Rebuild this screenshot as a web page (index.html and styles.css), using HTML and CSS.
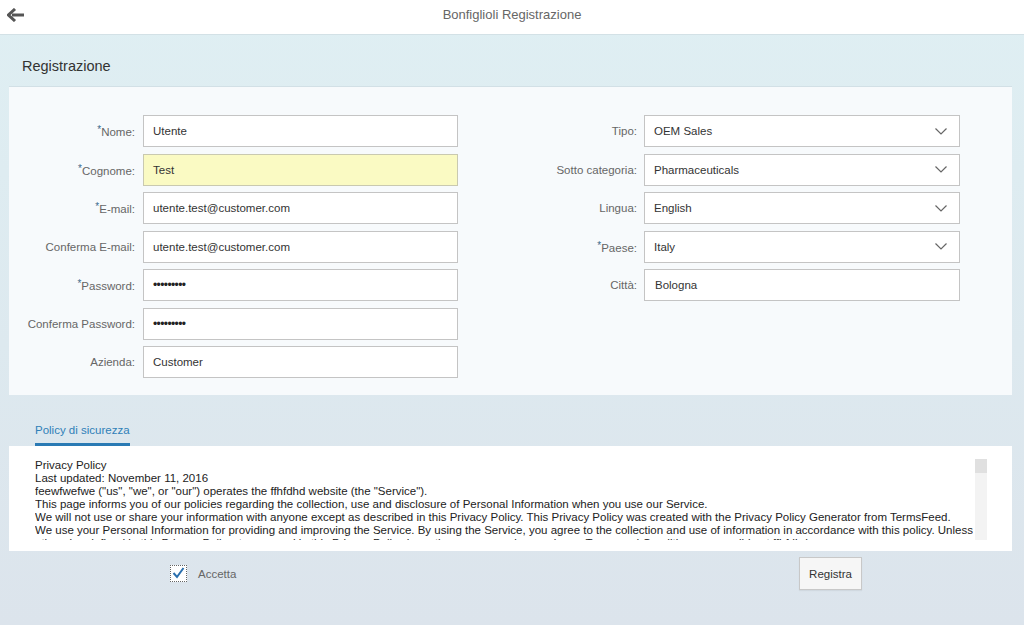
FILE: index.html
```html
<!DOCTYPE html>
<html lang="it">
<head>
<meta charset="utf-8">
<title>Bonfiglioli Registrazione</title>
<link rel="stylesheet" href="styles.css">
</head>
<body>
<header class="topbar">
  <button class="back" aria-label="Indietro">
    <svg width="18" height="14" viewBox="0 0 18 14"><path d="M17 7H5" stroke="#555" stroke-width="3" fill="none"/><path d="M8 1 L1.5 7 L8 13" stroke="#555" stroke-width="3" fill="none" stroke-linejoin="miter"/></svg>
  </button>
  <div class="topbar-title">Bonfiglioli Registrazione</div>
</header>
<main class="page">
  <div class="section-title">Registrazione</div>
  <section class="panel">
    <div class="col col-left">
      <label class="lbl"><span class="req">*</span>Nome:</label><div class="field">Utente</div>
      <label class="lbl"><span class="req">*</span>Cognome:</label><div class="field field-warn">Test</div>
      <label class="lbl"><span class="req">*</span>E-mail:</label><div class="field">utente.test@customer.com</div>
      <label class="lbl">Conferma E-mail:</label><div class="field">utente.test@customer.com</div>
      <label class="lbl"><span class="req">*</span>Password:</label><div class="field pw">•••••••••</div>
      <label class="lbl">Conferma Password:</label><div class="field pw">•••••••••</div>
      <label class="lbl">Azienda:</label><div class="field">Customer</div>
    </div>
    <div class="col col-right">
      <label class="lbl">Tipo:</label><div class="field select"><span>OEM Sales</span><svg class="chev" width="12" height="7" viewBox="0 0 12 7"><path d="M0.5 0.5 L6 6 L11.5 0.5" stroke="#666" stroke-width="1.2" fill="none"/></svg></div>
      <label class="lbl">Sotto categoria:</label><div class="field select"><span>Pharmaceuticals</span><svg class="chev" width="12" height="7" viewBox="0 0 12 7"><path d="M0.5 0.5 L6 6 L11.5 0.5" stroke="#666" stroke-width="1.2" fill="none"/></svg></div>
      <label class="lbl">Lingua:</label><div class="field select"><span>English</span><svg class="chev" width="12" height="7" viewBox="0 0 12 7"><path d="M0.5 0.5 L6 6 L11.5 0.5" stroke="#666" stroke-width="1.2" fill="none"/></svg></div>
      <label class="lbl"><span class="req">*</span>Paese:</label><div class="field select"><span>Italy</span><svg class="chev" width="12" height="7" viewBox="0 0 12 7"><path d="M0.5 0.5 L6 6 L11.5 0.5" stroke="#666" stroke-width="1.2" fill="none"/></svg></div>
      <label class="lbl">Città:</label><div class="field city">Bologna</div>
    </div>
  </section>
  <div class="tabs"><span class="tab active">Policy di sicurezza</span></div>
  <section class="policy">
    <div class="policy-text">
      Privacy Policy<br>
      Last updated: November 11, 2016<br>
      feewfwefwe ("us", "we", or "our") operates the ffhfdhd website (the "Service").<br>
      This page informs you of our policies regarding the collection, use and disclosure of Personal Information when you use our Service.<br>
      We will not use or share your information with anyone except as described in this Privacy Policy. This Privacy Policy was created with the Privacy Policy Generator from TermsFeed.<br>
      We use your Personal Information for providing and improving the Service. By using the Service, you agree to the collection and use of information in accordance with this policy. Unless otherwise defined in this Privacy Policy, terms used in this Privacy Policy have the same meanings as in our Terms and Conditions, accessible at ffhfdhd.
    </div>
    <div class="scrollbar"><div class="thumb"></div></div>
  </section>
  <div class="actions">
    <label class="accept">
      <span class="checkbox"><svg width="13" height="12" viewBox="0 0 13 12"><path d="M1.5 6 L5 10 L11.5 1" stroke="#2a6fae" stroke-width="2" fill="none"/></svg></span>
      <span>Accetta</span>
    </label>
    <button class="btn">Registra</button>
  </div>
</main>
</body>
</html>
```
FILE: styles.css
```css
* { box-sizing: border-box; }
html, body { margin: 0; padding: 0; }
body {
  font-family: "Liberation Sans", Arial, sans-serif;
  font-size: 11.5px;
  color: #333;
  width: 1024px;
  height: 625px;
  overflow: hidden;
  background: linear-gradient(#dfeff3 0%, #dde9ef 55%, #dce4ec 100%);
}
.topbar {
  height: 35px;
  background: #fff;
  border-bottom: 1px solid #d3e1e6;
  display: flex;
  align-items: center;
  position: relative;
}
.back {
  border: 0;
  background: transparent;
  padding: 0;
  margin-left: 7px;
  margin-top: -4px;
  width: 18px;
  height: 14px;
  display: flex;
}
.topbar-title {
  position: absolute;
  left: 0;
  right: 0;
  top: 7px;
  text-align: center;
  font-size: 13px;
  line-height: 16px;
  color: #666;
  pointer-events: none;
}
.page {
  padding: 0 12px 0 9px;
}
.section-title {
  height: 51px;
  padding: 22px 0 0 13px;
  font-size: 14.5px;
  line-height: 18px;
  color: #333;
}
.panel {
  height: 309px;
  background: #f7fafc;
  border-top: 1px solid #d2e0e6;
  padding-top: 28px;
  display: flex;
}
.col {
  display: grid;
  grid-auto-rows: 32px;
  row-gap: 6.5px;
  align-content: start;
}
.col-left { grid-template-columns: 126px 315px; column-gap: 8px; }
.col-right { grid-template-columns: 128px 316px; column-gap: 7px; margin-left: 51px; }
.lbl {
  text-align: right;
  align-self: center;
  color: #666;
  font-size: 11.5px;
  line-height: 14px;
  white-space: nowrap;
}
.req {
  color: #3d6a8c;
  font-size: 10px;
  vertical-align: 3px;
}
.field {
  border: 1px solid #c4c4c4;
  background: #fff;
  padding: 0 9px;
  display: flex;
  align-items: center;
  font-size: 11.5px;
  color: #333;
}
.field-warn { background: #fafac3; border-color: #c9c9b0; }
.pw { font-size: 12px; letter-spacing: -0.6px; color: #222; }
.city { padding-left: 10px; }
.select { justify-content: space-between; padding-right: 12px; }
.chev { display: block; }
.tabs {
  height: 51px;
  padding: 27px 0 0 26px;
}
.tab {
  display: inline-block;
  color: #2f80b8;
  font-size: 11.5px;
  line-height: 16px;
  padding-bottom: 5px;
  border-bottom: 3px solid #2a7ab4;
}
.policy {
  height: 105px;
  background: #fff;
  padding: 13px 25px 0 26px;
  display: flex;
  align-items: flex-start;
  gap: 2px;
}
.policy-text {
  width: 940px;
  height: 81px;
  overflow: hidden;
  font-size: 11.5px;
  line-height: 13px;
  color: #222;
}
.scrollbar {
  width: 12px;
  height: 81px;
  background: #f3f3f3;
}
.thumb { height: 14px; background: #e0e0e0; }
.actions {
  margin-top: 6px;
  padding-left: 161px;
  display: grid;
  grid-template-columns: 629px auto;
  align-items: center;
  height: 32px;
}
.accept {
  display: flex;
  align-items: center;
  gap: 11px;
  color: #666;
  font-size: 11.5px;
}
.checkbox {
  width: 17px;
  height: 17px;
  border: 1px dotted #666;
  background: #fff;
  display: flex;
  align-items: center;
  justify-content: center;
  margin-top: -1px;
}
.btn {
  width: 63px;
  height: 33px;
  border: 1px solid #c8c8c8;
  background: #f6f6f6;
  color: #333;
  font-family: "Liberation Sans", Arial, sans-serif;
  font-size: 11.5px;
  padding: 0;
  box-shadow: 0 1px 1px rgba(0,0,0,0.05);
}
```
